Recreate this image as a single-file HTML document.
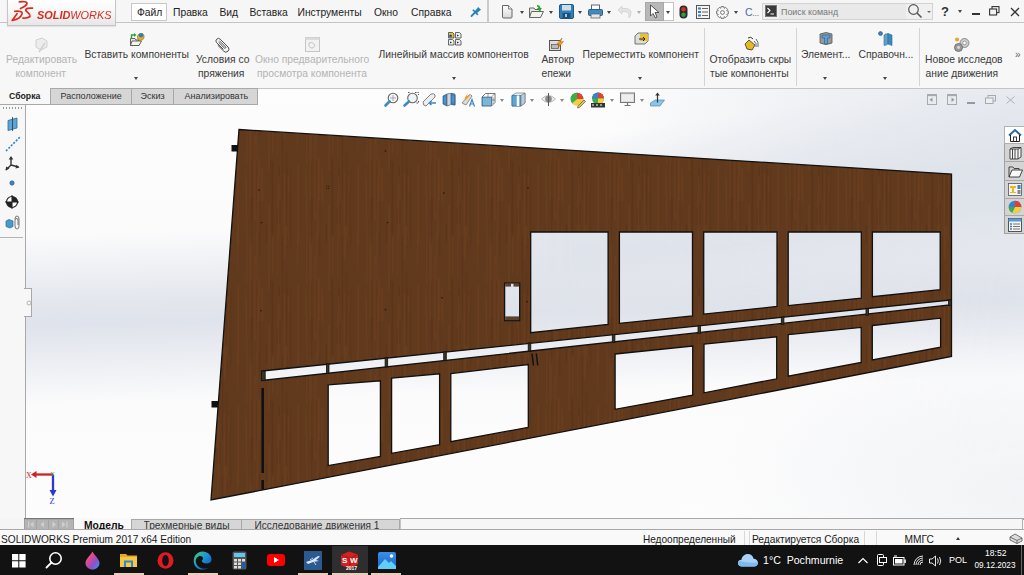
<!DOCTYPE html>
<html><head><meta charset="utf-8">
<style>
*{margin:0;padding:0;box-sizing:border-box}
html,body{width:1024px;height:575px;overflow:hidden;background:#f5f5f5;font-family:"Liberation Sans",sans-serif;color:#333}
.a{position:absolute}
.t{position:absolute;white-space:nowrap;font-size:10.3px;line-height:12px;color:#3a3a3a}
.g{color:#b4b4b4}
.dd{position:absolute;width:0;height:0;border-left:2.5px solid transparent;border-right:2.5px solid transparent;border-top:3px solid #444}
svg{position:absolute;overflow:visible}
</style></head><body>
<!-- title bar -->
<div class="a" style="left:0;top:0;width:1024px;height:23px;background:#f6f6f6;border-bottom:1.5px solid #c4c4c4"></div>
<!-- ribbon -->
<div class="a" style="left:0;top:23px;width:1024px;height:66px;background:#f7f7f7;border-bottom:1.5px solid #c4c4c4"></div>


<!-- logo -->
<div class="a" style="left:7px;top:-1px;width:109px;height:27px;background:linear-gradient(180deg,#ffffff 0%,#f7f7f7 50%,#e6e6e6 100%);border:1px solid #c6c6c6;border-top:none;box-shadow:0 1px 1px rgba(0,0,0,0.08)"></div>
<svg width="40" height="24" style="left:0;top:0" viewBox="0 0 40 24">
<g fill="none" stroke="#db2a1e" stroke-width="1.7" stroke-linecap="round" stroke-linejoin="round">
<path d="M19.3,1.8 C23,1.3 27.5,1.6 27,3.6 C26.3,5.6 23.5,7.2 20.5,8.5"/>
<path d="M14.8,11.3 C19,10.9 22.8,11.3 22,14 C21,17 16.5,19.6 12.2,20.5 L17.2,13.6"/>
<path d="M32.5,8.2 C29,8 25.3,8.3 25.8,10.2 C26.3,12.2 30.6,13.6 30.1,16 C29.6,17.9 26,18.1 23,18.2"/>
</g>
</svg>
<div class="t" style="left:36.5px;top:8px;font-size:11.6px;line-height:13px;font-style:italic;color:#d52d22;transform-origin:0 0;transform:scaleX(0.94)"><b>SOLID</b>WORKS</div>

<!-- menu -->
<div class="a" style="left:131px;top:3px;width:36px;height:18px;background:#fff;border:1px solid #c8c8c8"></div>
<div class="t" style="left:137px;top:7px;color:#222">Файл</div>
<div class="t" style="left:173px;top:7px;color:#222">Правка</div>
<div class="t" style="left:219.5px;top:7px;color:#222">Вид</div>
<div class="t" style="left:249.5px;top:7px;color:#222">Вставка</div>
<div class="t" style="left:297.5px;top:7px;color:#222">Инструменты</div>
<div class="t" style="left:374px;top:7px;color:#222">Окно</div>
<div class="t" style="left:411px;top:7px;color:#222">Справка</div>
<svg width="12" height="12" style="left:470px;top:5px" viewBox="0 0 12 12"><path d="M1.5,11 L5.5,7" stroke="#2a84b8" stroke-width="1.8" stroke-linecap="round"/><path d="M2.3,5.3 L7.3,10.5 L8.4,9.3 L3.5,4.3Z" fill="#2a84b8"/><path d="M4.5,6.5 L8.2,2 L11,4.8 L6.5,8.5Z" fill="#2a84b8"/></svg>
<div class="a" style="left:487px;top:0;width:2px;height:22px;background:#cacaca"></div>

<!-- QAT -->
<svg width="14" height="15" style="left:500px;top:4px" viewBox="0 0 14 15"><defs><linearGradient id="nd" x1="0" y1="0" x2="0" y2="1"><stop offset="0" stop-color="#fff"/><stop offset="1" stop-color="#d8d8d8"/></linearGradient></defs><path d="M2.5,1.5 H8.5 L12,5 V13 Q12,14 11,14 H3.5 Q2.5,14 2.5,13 Z" fill="url(#nd)" stroke="#666" stroke-width="1"/><path d="M8.5,1.5 V5 H12" fill="#eee" stroke="#666" stroke-width="0.8"/></svg>
<div class="dd" style="left:519.5px;top:11px"></div>
<svg width="17" height="15" style="left:528px;top:4px" viewBox="0 0 17 15"><path d="M1.5,4 H6 L7,5.5 H12 V13.5 H1.5 Z" fill="#e8e8e0" stroke="#666"/><path d="M3.5,7.5 H15.5 L12.5,13.5 H1.5 Z" fill="#f2f2ea" stroke="#666"/><path d="M9,1 Q12,1 12.5,4 L14,4 L11.5,7.5 L9,4 L10.5,4 Q10,2.5 9,2.5Z" fill="#2aa33a"/></svg>
<div class="dd" style="left:549px;top:11px"></div>
<svg width="15" height="15" style="left:558.5px;top:4px" viewBox="0 0 15 15"><rect x="0.5" y="0.5" width="14" height="14" rx="1.5" fill="#2f7fb8" stroke="#1d5a88"/><rect x="3" y="1" width="9" height="5.5" fill="#cfdde8"/><rect x="3.5" y="9" width="8" height="5.5" fill="#1e4f78"/><rect x="6" y="10" width="2" height="3" fill="#9cc"/></svg>
<div class="dd" style="left:578px;top:11px"></div>
<svg width="15" height="15" style="left:587.5px;top:4px" viewBox="0 0 15 15"><rect x="3.5" y="1" width="8" height="5" fill="#fff" stroke="#666"/><rect x="0.5" y="5.5" width="14" height="6" rx="1" fill="#3d8ac4" stroke="#24618f"/><rect x="3" y="10" width="9" height="4" fill="#e6e6e6" stroke="#666" stroke-width="0.8"/></svg>
<div class="dd" style="left:607px;top:11px"></div>
<svg width="15" height="15" style="left:617px;top:4px" viewBox="0 0 15 15"><path d="M5,2 L1,6 L5,10 V7.5 H8 Q12,7.5 12,11 V14 Q14.5,11 14,8 Q13.5,4.5 8,4.5 H5 Z" fill="#e4e4e4" stroke="#cfcfcf" stroke-width="0.8"/></svg>
<div class="dd" style="left:636.5px;top:11px;border-top-color:#aaa"></div>
<div class="a" style="left:645px;top:2px;width:29px;height:19px;background:#fff;border:1px solid #c4c4c4"></div>
<div class="a" style="left:645px;top:2px;width:19px;height:19px;background:#b8b8b8;border:1px solid #a8a8a8"></div>
<svg width="12" height="15" style="left:649px;top:4px" viewBox="0 0 12 15"><path d="M1.5,1 V12 L4,9.5 L6.5,14 L8,13 L6,8.5 H10 Z" fill="#fff" stroke="#444" stroke-width="0.9" stroke-linejoin="round"/></svg>
<div class="dd" style="left:666px;top:11px"></div>
<svg width="9" height="14" style="left:679px;top:5px" viewBox="0 0 9 14"><rect x="0.5" y="0.5" width="8" height="13" rx="4" fill="#2a2a2a"/><circle cx="4.5" cy="4.2" r="2.3" fill="#e02a2a"/><circle cx="4.5" cy="9.8" r="2.3" fill="#2aa040"/></svg>
<svg width="14" height="14" style="left:696px;top:5px" viewBox="0 0 14 14"><rect x="0.5" y="0.5" width="13" height="13" fill="#f4f4f4" stroke="#555"/><rect x="2" y="2.5" width="3" height="2" fill="#3a7fc0"/><rect x="2" y="6" width="3" height="2" fill="#3a7fc0"/><rect x="2" y="9.5" width="3" height="2" fill="#3a7fc0"/><path d="M6,3.5 H12 M6,7 H12 M6,10.5 H12" stroke="#666"/></svg>
<svg width="13" height="13" style="left:715.5px;top:5.5px" viewBox="0 0 13 13"><path d="M10.77,4.79 L12.33,5.06 L12.33,7.94 L10.77,8.21 L10.73,8.31 L11.64,9.60 L9.60,11.64 L8.31,10.73 L8.21,10.77 L7.94,12.33 L5.06,12.33 L4.79,10.77 L4.69,10.73 L3.40,11.64 L1.36,9.60 L2.27,8.31 L2.23,8.21 L0.67,7.94 L0.67,5.06 L2.23,4.79 L2.27,4.69 L1.36,3.40 L3.40,1.36 L4.69,2.27 L4.79,2.23 L5.06,0.67 L7.94,0.67 L8.21,2.23 L8.31,2.27 L9.60,1.36 L11.64,3.40 L10.73,4.69Z" fill="#f6f6f6" stroke="#666" stroke-width="0.9" stroke-linejoin="round"/><circle cx="6.5" cy="6.5" r="1.9" fill="#fff" stroke="#666" stroke-width="0.9"/></svg>
<div class="dd" style="left:734px;top:11px"></div>
<div class="t" style="left:745px;top:6px;font-size:10.5px;color:#3a6fa8;letter-spacing:-0.3px">C<span style="color:#778;font-size:9px">...</span></div>

<!-- search -->
<div class="a" style="left:762px;top:3px;width:171px;height:17px;background:#f0f0f0;border:1px solid #d2d2d2"></div>
<div class="a" style="left:779px;top:4px;width:127px;height:15px;background:#e9e9e9"></div>
<svg width="12" height="12" style="left:765px;top:5px" viewBox="0 0 12 12"><rect x="0.5" y="0.5" width="11" height="11" fill="#3a3a3a" stroke="#777"/><path d="M2.5,3 L5,5.5 L2.5,8" fill="none" stroke="#fff" stroke-width="1.1"/><path d="M5.5,9 H9" stroke="#fff"/></svg>
<div class="t" style="left:781px;top:5.5px;font-size:8.9px;color:#777">Поиск команд</div>
<svg width="16" height="16" style="left:907px;top:3px" viewBox="0 0 16 16"><circle cx="6.5" cy="6.5" r="4.8" fill="none" stroke="#555" stroke-width="1.2"/><path d="M10,10 L14.5,14.5" stroke="#555" stroke-width="1.6"/></svg>
<div class="dd" style="left:926.5px;top:11px;border-left-width:2px;border-right-width:2px;border-top-width:2px;border-top-color:#666"></div>
<div class="t" style="left:941px;top:5px;font-size:13px;line-height:14px;font-weight:bold;color:#333">?</div>
<div class="dd" style="left:957.5px;top:10px"></div>
<div class="a" style="left:971.5px;top:13px;width:8px;height:2px;background:#333"></div>
<svg width="11" height="10" style="left:989px;top:6px" viewBox="0 0 11 10"><rect x="3" y="0.6" width="7" height="6" fill="none" stroke="#333" stroke-width="1.1"/><rect x="0.6" y="3" width="7" height="6" fill="#f3f3f3" stroke="#333" stroke-width="1.1"/></svg>
<svg width="10" height="10" style="left:1009.5px;top:6.5px" viewBox="0 0 10 10"><path d="M1,1 L9,9 M9,1 L1,9" stroke="#333" stroke-width="1.3"/></svg>


<!-- ribbon content -->
<svg width="16" height="16" style="left:33px;top:36.5px" viewBox="0 0 16 16" opacity="0.35"><path d="M3,3 L9,1 L14,4 L14,10 L8,13 L3,10 Z" fill="#ddd" stroke="#888"/><path d="M6,15 L12,6" stroke="#888" stroke-width="1.5"/></svg>
<div class="t g" style="left:6px;top:54px">Редактировать</div>
<div class="t g" style="left:15.5px;top:68px">компонент</div>

<svg width="16" height="15" style="left:128.5px;top:32px" viewBox="0 0 16 15"><path d="M1.5,6.5 H6 L7,8 H10 V13.5 H1.5Z" fill="#e6e6e6" stroke="#555" stroke-width="0.9"/><path d="M3,9 H12.5 L10,13.5 H1.5Z" fill="#f4f4f0" stroke="#555" stroke-width="0.9"/><path d="M8.5,4.5 Q8.5,2 11.5,1.5 Q14.5,1 15,3.5 V6 Q14,8.5 11,8.5 Q8.5,8 8.5,6Z" fill="#e8b020" stroke="#8a6a10" stroke-width="0.6"/><circle cx="12" cy="3.2" r="2.2" fill="#2a7fc0"/><path d="M2.5,6.5 V3 H5.5" fill="none" stroke="#2aa040" stroke-width="1.4"/><path d="M5,1 L7.5,3 L5,5Z" fill="#2aa040"/></svg>
<div class="t" style="left:84.5px;top:49.2px">Вставить компоненты</div>
<div class="dd" style="left:133.5px;top:76.5px"></div>

<svg width="14" height="15" style="left:214.5px;top:36.5px" viewBox="0 0 14 15"><g transform="rotate(-45 7 7.5)" fill="none" stroke="#444" stroke-width="0.9"><path d="M4.5,12 V2.5 A2.5,2.5 0 0 1 9.5,2.5 V13.5 A3,3 0 0 1 3.5,13.5 V5"/><path d="M6.2,3.5 V12 A0.9,0.9 0 0 0 7.8,12 V3"/></g></svg>
<div class="t" style="left:196px;top:54px">Условия со</div>
<div class="t" style="left:198px;top:68px">пряжения</div>

<svg width="15" height="15" style="left:305px;top:36.5px" viewBox="0 0 15 15" opacity="0.45"><rect x="0.5" y="0.5" width="14" height="14" fill="#eee" stroke="#888"/><rect x="0.5" y="0.5" width="14" height="2.5" fill="#bbb"/><path d="M4,6 Q7,4 10,8 Q9,12 6,11 Q3,10 4,6Z" fill="none" stroke="#888"/></svg>
<div class="t g" style="left:255px;top:54px">Окно предварительного</div>
<div class="t g" style="left:257px;top:68px">просмотра компонента</div>

<svg width="14" height="14" style="left:447.5px;top:31.5px" viewBox="0 0 14 14"><path d="M0.5,0.5 H4.5 L6,2 V6 H0.5Z" fill="#e8c02a" stroke="#444" stroke-width="0.8"/><rect x="1" y="3" width="3" height="2.5" fill="#3a7fc0"/><path d="M7.5,0.5 H11.5 L13,2 V6 H7.5Z" fill="#eee" stroke="#444" stroke-width="0.8"/><path d="M0.5,7.5 H4.5 L6,9 V13 H0.5Z" fill="#eee" stroke="#444" stroke-width="0.8"/><path d="M7.5,7.5 H11.5 L13,9 V13 H7.5Z" fill="#eee" stroke="#444" stroke-width="0.8"/><path d="M2,2.5 L4,3.5 L2,4.5Z M9,2.5 L11,3.5 L9,4.5Z M2,9.5 L4,10.5 L2,11.5Z M9,9.5 L11,10.5 L9,11.5Z" fill="#333"/></svg>
<div class="t" style="left:378.5px;top:49.2px">Линейный массив компонентов</div>
<div class="dd" style="left:452px;top:76.5px"></div>

<svg width="15" height="14" style="left:549px;top:37px" viewBox="0 0 15 14"><rect x="0.5" y="3.5" width="11" height="10" fill="#ddd" stroke="#555"/><rect x="2.5" y="7.5" width="7" height="4" fill="#bbb" stroke="#555" stroke-width="0.7"/><path d="M8,7 L13,1 L11.5,5 L14.5,4.5 L9,11 L10.5,7Z" fill="#f0a020" stroke="#c05010" stroke-width="0.5"/></svg>
<div class="t" style="left:541.5px;top:54px">Автокр</div>
<div class="t" style="left:541.5px;top:68px">епежи</div>

<svg width="15" height="13" style="left:633.5px;top:32px" viewBox="0 0 15 13"><path d="M1,4 L4,1 H14 V9 L11,12 H1Z" fill="#ddd" stroke="#555" stroke-width="0.8"/><rect x="6" y="2" width="8" height="7" fill="#e8c030"/><path d="M5,7 H11 M9,5 L11,7 L9,9" stroke="#222" stroke-width="1" fill="none"/></svg>
<div class="t" style="left:582.5px;top:49.2px">Переместить компонент</div>
<div class="dd" style="left:638px;top:76.5px"></div>
<div class="a" style="left:704px;top:28px;width:1px;height:58px;background:#d4d4d4"></div>

<svg width="15" height="15" style="left:743.5px;top:36px" viewBox="0 0 15 15"><path d="M1,8 L5,4 L11,9 L8,14 L3,13Z" fill="#e8b820" stroke="#333" stroke-width="0.8"/><path d="M10,5 Q13,7 12,11 M12,3 Q15,6 14,11" stroke="#666" fill="none"/><path d="M4,2 Q7,0 9,3" stroke="#333" fill="none"/></svg>
<div class="t" style="left:709.5px;top:54px">Отобразить скры</div>
<div class="t" style="left:710px;top:68px">тые компоненты</div>
<div class="a" style="left:796px;top:28px;width:1px;height:58px;background:#d4d4d4"></div>

<svg width="14" height="15" style="left:818.5px;top:31px" viewBox="0 0 14 15"><path d="M1,3 Q7,0 13,3 V12 Q7,15 1,12Z" fill="#999" stroke="#555" stroke-width="0.8"/><path d="M3,4 H11 V7 H8.5 V13 H5.5 V7 H3Z" fill="#5aa0d8" stroke="#2a5a8a" stroke-width="0.6"/></svg>
<div class="t" style="left:801px;top:49.2px">Элемент...</div>
<div class="dd" style="left:822.5px;top:76.5px"></div>

<svg width="15" height="15" style="left:878px;top:31px" viewBox="0 0 15 15"><circle cx="2.5" cy="2.5" r="2" fill="#3a7fc0" stroke="#245a8a" stroke-width="0.6"/><path d="M6,4 L10,2.5 V13 L6,14.5Z" fill="#5aaad8" stroke="#2a6a9a" stroke-width="0.6"/><path d="M10,2.5 L14,4 V14.5 L10,13Z" fill="#3a8ac0" stroke="#2a6a9a" stroke-width="0.6"/><path d="M8,2 V15" stroke="#888" stroke-width="0.6"/></svg>
<div class="t" style="left:858.5px;top:49.2px">Справочн...</div>
<div class="dd" style="left:883px;top:76.5px"></div>
<div class="a" style="left:919px;top:28px;width:1px;height:58px;background:#d4d4d4"></div>

<svg width="16" height="15" style="left:954px;top:36.5px" viewBox="0 0 16 15"><circle cx="10.5" cy="6" r="4.5" fill="#ccc" stroke="#777" stroke-width="0.8"/><circle cx="10.5" cy="6" r="1.8" fill="#fff" stroke="#777" stroke-width="0.6"/><circle cx="4.5" cy="10.5" r="4" fill="#999" stroke="#666" stroke-width="0.8"/><circle cx="4.5" cy="10.5" r="1.4" fill="#ddd"/><circle cx="3" cy="2.5" r="2" fill="#f0a030"/></svg>
<div class="t" style="left:925px;top:54px">Новое исследов</div>
<div class="t" style="left:925.5px;top:68px">ание движения</div>
<div class="t" style="left:1015px;top:49px;font-size:10px;color:#666">»</div>

<!-- viewport -->
<div class="a" style="left:26px;top:88.5px;width:998px;height:430px;background:linear-gradient(178.45deg,#fdfdfd 0%,#fbfbfc 32%,#eef0f4 40%,#e3e6ed 47%,#dfe3eb 52%,#eceef3 60%,#fbfbfc 69%,#fdfdfd 100%)"></div>
<div class="a" style="left:26px;top:88.5px;width:998px;height:430px;background:radial-gradient(ellipse 320px 140px at 1000px 400px,rgba(222,226,234,0.35) 0%,rgba(222,226,234,0) 100%),radial-gradient(ellipse 420px 230px at 1000px 40px,rgba(222,226,234,0.75) 0%,rgba(222,226,234,0.45) 50%,rgba(222,226,234,0) 100%),linear-gradient(172deg,rgba(222,226,234,0) 0%,rgba(222,226,234,0) 22%,rgba(222,226,234,0.92) 37%,rgba(222,226,234,0.92) 45%,rgba(222,226,234,0) 56%);-webkit-mask-image:linear-gradient(90deg,transparent 0%,transparent 30%,#000 55%,#000 100%);mask-image:linear-gradient(90deg,transparent 0%,transparent 30%,#000 55%,#000 100%)"></div>
<!-- tab bar + left panel -->
<div class="a" style="left:0;top:87px;width:258px;height:17.5px;background:#f7f7f7;border-bottom:1.5px solid #a8a8a8"></div>
<div class="a" style="left:0;top:104.5px;width:26px;height:413.5px;background:#f7f7f7;border-right:1.5px solid #a8a8a8"></div>
<div class="a" style="left:2.5px;top:107px;width:20px;height:2px;background:repeating-linear-gradient(90deg,#999 0 1px,transparent 1px 3px)"></div>
<div class="a" style="left:0;top:237px;width:23px;height:1px;background:#b4b4b4"></div>
<div class="a" style="left:24px;top:288px;width:8px;height:29px;background:#f7f7f7;border:1.5px solid #a8a8a8;border-left:none"></div>
<svg width="6" height="6" style="left:25.5px;top:299.5px" viewBox="0 0 6 6"><circle cx="3" cy="3" r="2" fill="none" stroke="#aaa" stroke-width="0.9"/></svg>

<!-- tabs -->
<div class="t" style="left:9px;top:90px;font-size:8.7px;font-weight:bold;color:#222">Сборка</div>
<div class="a" style="left:50px;top:88px;width:208px;height:16.5px;background:#d6d6d6;border:1px solid #a8a8a8"></div>
<div class="a" style="left:131px;top:88px;width:1px;height:16px;background:#a8a8a8"></div>
<div class="a" style="left:173px;top:88px;width:1px;height:16px;background:#a8a8a8"></div>
<div class="t" style="left:60.5px;top:90px;font-size:9px;color:#333">Расположение</div>
<div class="t" style="left:140.5px;top:90px;font-size:9px;color:#333">Эскиз</div>
<div class="t" style="left:184.5px;top:90px;font-size:9px;color:#333">Анализировать</div>


<!-- panel -->
<svg width="1024" height="575" style="left:0;top:0">
<defs>
<pattern id="wood" patternUnits="userSpaceOnUse" width="60" height="120"><rect width="60" height="120" fill="#61391c"/><rect x="14.3" y="15.7" width="2" height="83.7" fill="#6c4120" opacity="0.6"/><rect x="37.5" y="72.7" width="0.8" height="83.2" fill="#6c4120" opacity="0.6"/><rect x="37.5" y="-47.3" width="0.8" height="83.2" fill="#6c4120" opacity="0.6"/><rect x="15.6" y="23.0" width="1" height="68.8" fill="#5a3218" opacity="0.7"/><rect x="50.2" y="47.7" width="1.6" height="79.6" fill="#5e361a" opacity="0.7"/><rect x="50.2" y="-72.3" width="1.6" height="79.6" fill="#5e361a" opacity="0.7"/><rect x="38.1" y="46.8" width="2" height="16.1" fill="#5c3419" opacity="0.7"/><rect x="9.6" y="5.1" width="2" height="73.5" fill="#6a3f1f" opacity="0.7"/><rect x="28.4" y="85.7" width="1.6" height="84.1" fill="#6c4120" opacity="0.6"/><rect x="28.4" y="-34.3" width="1.6" height="84.1" fill="#6c4120" opacity="0.6"/><rect x="43.7" y="53.4" width="2" height="85.2" fill="#6a3f1f" opacity="0.7"/><rect x="43.7" y="-66.6" width="2" height="85.2" fill="#6a3f1f" opacity="0.7"/><rect x="5.8" y="59.4" width="1" height="34.3" fill="#6c4120" opacity="0.6"/><rect x="46.7" y="50.5" width="1.3" height="77.5" fill="#5a3218" opacity="0.7"/><rect x="46.7" y="-69.5" width="1.3" height="77.5" fill="#5a3218" opacity="0.7"/><rect x="21.1" y="48.9" width="2" height="32.4" fill="#6a3f1f" opacity="0.7"/><rect x="40.9" y="102.8" width="0.8" height="89.3" fill="#5e361a" opacity="0.7"/><rect x="40.9" y="-17.2" width="0.8" height="89.3" fill="#5e361a" opacity="0.7"/><rect x="41.9" y="115.8" width="1.3" height="82.9" fill="#5a3218" opacity="0.7"/><rect x="41.9" y="-4.2" width="1.3" height="82.9" fill="#5a3218" opacity="0.7"/><rect x="6.2" y="76.0" width="1" height="89.1" fill="#6a3f1f" opacity="0.7"/><rect x="6.2" y="-44.0" width="1" height="89.1" fill="#6a3f1f" opacity="0.7"/><rect x="17.1" y="57.8" width="0.8" height="62.9" fill="#6c4120" opacity="0.6"/><rect x="17.1" y="-62.2" width="0.8" height="62.9" fill="#6c4120" opacity="0.6"/><rect x="5.3" y="49.3" width="0.8" height="26.3" fill="#6a3f1f" opacity="0.7"/><rect x="25.6" y="104.7" width="1.6" height="18.3" fill="#5a3218" opacity="0.7"/><rect x="25.6" y="-15.3" width="1.6" height="18.3" fill="#5a3218" opacity="0.7"/><rect x="45.7" y="86.2" width="1.6" height="39.8" fill="#6a3f1f" opacity="0.7"/><rect x="45.7" y="-33.8" width="1.6" height="39.8" fill="#6a3f1f" opacity="0.7"/><rect x="30.3" y="37.2" width="0.8" height="20.8" fill="#5a3218" opacity="0.7"/><rect x="32.1" y="116.6" width="1" height="36.9" fill="#6a3f1f" opacity="0.7"/><rect x="32.1" y="-3.4" width="1" height="36.9" fill="#6a3f1f" opacity="0.7"/><rect x="9.4" y="117.6" width="0.8" height="40.5" fill="#6a3f1f" opacity="0.7"/><rect x="9.4" y="-2.4" width="0.8" height="40.5" fill="#6a3f1f" opacity="0.7"/><rect x="57.5" y="45.2" width="1.6" height="80.2" fill="#6c4120" opacity="0.6"/><rect x="57.5" y="-74.8" width="1.6" height="80.2" fill="#6c4120" opacity="0.6"/><rect x="38.6" y="81.7" width="2" height="22.7" fill="#5a3218" opacity="0.7"/><rect x="16.3" y="112.4" width="1" height="47.8" fill="#6a3f1f" opacity="0.7"/><rect x="16.3" y="-7.6" width="1" height="47.8" fill="#6a3f1f" opacity="0.7"/><rect x="31.3" y="40.7" width="2" height="74.1" fill="#5a3218" opacity="0.7"/><rect x="18.9" y="73.9" width="1.6" height="62.4" fill="#5c3419" opacity="0.7"/><rect x="18.9" y="-46.1" width="1.6" height="62.4" fill="#5c3419" opacity="0.7"/><rect x="38.0" y="56.0" width="1.3" height="65.9" fill="#6a3f1f" opacity="0.7"/><rect x="38.0" y="-64.0" width="1.3" height="65.9" fill="#6a3f1f" opacity="0.7"/><rect x="36.5" y="88.6" width="1.3" height="16.7" fill="#5c3419" opacity="0.7"/><rect x="57.3" y="115.6" width="0.8" height="33.8" fill="#6c4120" opacity="0.6"/><rect x="57.3" y="-4.4" width="0.8" height="33.8" fill="#6c4120" opacity="0.6"/><rect x="17.9" y="38.4" width="2" height="42.3" fill="#6a3f1f" opacity="0.7"/><rect x="45.5" y="31.7" width="2" height="74.0" fill="#5c3419" opacity="0.7"/><rect x="46.3" y="116.6" width="0.8" height="66.3" fill="#5e361a" opacity="0.7"/><rect x="46.3" y="-3.4" width="0.8" height="66.3" fill="#5e361a" opacity="0.7"/><rect x="18.6" y="78.4" width="1" height="35.2" fill="#6a3f1f" opacity="0.7"/><rect x="11.2" y="77.9" width="1.6" height="22.3" fill="#5a3218" opacity="0.7"/><rect x="19.3" y="81.0" width="1.3" height="31.8" fill="#5e361a" opacity="0.7"/><rect x="4.8" y="106.2" width="1" height="48.8" fill="#5e361a" opacity="0.7"/><rect x="4.8" y="-13.8" width="1" height="48.8" fill="#5e361a" opacity="0.7"/><rect x="47.2" y="63.6" width="0.8" height="29.3" fill="#5a3218" opacity="0.7"/><rect x="11.0" y="40.8" width="1.3" height="77.1" fill="#5c3419" opacity="0.7"/><rect x="48.4" y="70.7" width="1.3" height="46.6" fill="#5a3218" opacity="0.7"/><rect x="47.6" y="55.8" width="1.3" height="62.6" fill="#6a3f1f" opacity="0.7"/></pattern>
</defs>
<path fill="url(#wood)" stroke="#111" stroke-width="1.3" fill-rule="evenodd" d="
M239,129.5 L951.5,174 L951.5,356.5 L211,500 Z
M530.7,232 L608.1,232 L608.1,324.4 L530.7,332.7 Z
M619.4,232 L692.5,232 L692.5,316 L619.4,323.3 Z
M703.7,232 L777,232 L777,306.5 L703.7,314.1 Z
M788.2,232 L861.3,232 L861.3,298.1 L788.2,305.6 Z
M872.4,232 L940.2,232 L940.2,289.7 L872.4,296.7 Z
M328.2,384.8 L380.4,380.8 L380.4,456.5 L328.2,465.6 Z
M391.6,378.2 L439.6,373.8 L439.6,444.7 L391.6,453.3 Z
M450.8,373.6 L528.3,364.5 L528.3,427.3 L450.8,441.6 Z
M615.1,354 L692.7,346 L692.7,395.1 L615.1,409.3 Z
M704,344.2 L776.7,336.8 L776.7,378.8 L704,392.8 Z
M788.2,334.7 L861.2,327.4 L861.2,362.5 L788.2,376.1 Z
M872.3,325.5 L940.6,318.2 L940.6,347.2 L872.3,360 Z
M262,371 L950,300 L950,305 L262,380.5 Z
M504.6,283.2 L519.7,283.2 L519.7,320.6 L504.6,320.6 Z
"/>

<g>
<g fill="#2a180c"><rect x="384.7" y="150.4" width="1.6" height="1.3"/><rect x="258.2" y="189.4" width="1.6" height="1.3"/><rect x="443.0" y="192.4" width="1.6" height="1.3"/><rect x="260.7" y="221.9" width="1.6" height="1.3"/><rect x="386.7" y="221.9" width="1.6" height="1.3"/><rect x="527.2" y="187.4" width="1.6" height="1.3"/><rect x="441.2" y="297.1" width="1.6" height="1.3"/><rect x="260.2" y="310.0" width="1.6" height="1.3"/><rect x="384.7" y="308.9" width="1.6" height="1.3"/><rect x="526.2" y="301.0" width="1.6" height="1.3"/><rect x="326.2" y="185.8" width="1" height="1"/><rect x="328.2" y="185.8" width="1" height="1"/><rect x="326.2" y="188" width="1" height="1"/><rect x="328.2" y="188" width="1" height="1"/></g>
<!-- side tabs -->
<rect x="231.5" y="145" width="6.5" height="6.5" fill="#111"/>
<rect x="211.5" y="401" width="6.5" height="6.5" fill="#111"/>
<!-- slot bars -->
<rect x="505.2" y="283.8" width="14" height="2.8" fill="#5a4232"/>
<rect x="511" y="283.8" width="2.5" height="3.5" fill="#dfe2ea"/>
<rect x="505.2" y="316.4" width="14" height="3.8" fill="#5a4232"/>
<!-- black bar -->
<rect x="261.4" y="388" width="2.6" height="85" fill="#111"/>
<rect x="261.4" y="480" width="2.6" height="9.5" fill="#111"/>
<!-- double ticks -->
<path d="M532,353.5 L533.5,365.5 M536.3,353.5 L537.8,365.5" stroke="#111" stroke-width="1.5"/>
</g>
<g fill="#3a3522" stroke="#111" stroke-width="0.8">
<rect x="261.6" y="371" width="3.6" height="9.5"/>
<rect x="326.4" y="363.8" width="2.6" height="9.6"/>
<rect x="385.1" y="357.8" width="2.6" height="9"/>
<rect x="443.7" y="351.8" width="2.6" height="8.8"/>
<rect x="528.2" y="343" width="2.6" height="8.3"/>
<rect x="612.3" y="334.3" width="2.6" height="8.2"/>
<rect x="698" y="325.5" width="2.6" height="7.8"/>
<rect x="781.3" y="317" width="2.6" height="7.3"/>
<rect x="866" y="308.4" width="2.6" height="6.8"/>
<rect x="948.6" y="300" width="2.6" height="5.5"/>
</g>
</svg>


<!-- left toolbar icons -->
<svg width="14" height="14" style="left:6px;top:117px" viewBox="0 0 14 14"><path d="M2,3.5 L11,1 V11 L2,13.5Z" fill="#5aa6d6" stroke="#2d6a96" stroke-width="0.8"/><path d="M6.5,0 V14" stroke="#333" stroke-width="0.8"/></svg>
<svg width="16" height="16" style="left:4.5px;top:136px" viewBox="0 0 16 16"><path d="M1,15 L15,1" stroke="#2a82c4" stroke-width="1.6" stroke-dasharray="2 1.5"/></svg>
<svg width="15" height="15" style="left:5px;top:156px" viewBox="0 0 15 15"><path d="M6,9 V1.5 M6,9 L13.5,11 M6,9 L1,14" stroke="#333" stroke-width="1.4" fill="none"/><path d="M6,0 L8.3,3.5 H3.7Z M14.5,11.5 L10.5,12.5 L11.5,8.8Z M0.5,14.5 L1.2,10.5 L4.5,12.5Z" fill="#333"/></svg>
<svg width="6" height="6" style="left:9px;top:180px" viewBox="0 0 6 6"><circle cx="3" cy="3" r="2.2" fill="#3a84c0" stroke="#2a5a8a" stroke-width="0.6"/></svg>
<svg width="14" height="14" style="left:5px;top:195px" viewBox="0 0 14 14"><circle cx="7" cy="7" r="5.5" fill="#fff" stroke="#222" stroke-width="1.2"/><path d="M7,1.5 A5.5,5.5 0 0 1 12.5,7 H7Z M7,12.5 A5.5,5.5 0 0 1 1.5,7 H7Z" fill="#222"/><path d="M7,0 V14 M0,7 H14" stroke="#222" stroke-width="1"/></svg>
<svg width="16" height="15" style="left:4.5px;top:214.5px" viewBox="0 0 16 15"><path d="M1,6 L4,4.5 L8,6 V11.5 L5,13 L1,11.5Z" fill="#4a9ad0" stroke="#2a6a9a" stroke-width="0.7"/><path d="M10,4 Q10,1 12,1 Q14,1 14,4 V11 Q14,14 12,14 Q10,14 10,11 V5 Q10,3.5 12,3.5 Q13,3.5 13,5 V10" fill="none" stroke="#666" stroke-width="0.9"/></svg>

<!-- heads-up view toolbar -->
<svg width="15" height="15" style="left:383.5px;top:92px" viewBox="0 0 15 15"><circle cx="9" cy="6" r="4.8" fill="#f4f4f4" stroke="#666" stroke-width="1.1"/><path d="M9,3 V9 M6,6 H12" stroke="#999" stroke-width="0.8"/><path d="M5.5,9.5 L1.5,13.5" stroke="#3a8ac4" stroke-width="2.6" stroke-linecap="round"/></svg>
<svg width="16" height="15" style="left:402.5px;top:92px" viewBox="0 0 16 15"><circle cx="9.5" cy="6" r="4.8" fill="#eef4f8" stroke="#666" stroke-width="1.1"/><path d="M5,0.5 H7 M12,0.5 H15.5 V3 M15.5,9 V11 H13" stroke="#555" stroke-dasharray="1.5 1" fill="none"/><path d="M6,9.5 L1.5,13.5" stroke="#3a8ac4" stroke-width="2.6" stroke-linecap="round"/></svg>
<svg width="15" height="15" style="left:422px;top:92px" viewBox="0 0 15 15"><path d="M1,10 L9,2 Q12,1 13,3 Q14,5 11,7 L4,14 Q1,14 1,10Z" fill="#eee" stroke="#777" stroke-width="0.9"/><path d="M7,11 H14 M7,11 L9.5,9 M7,11 L9.5,13" stroke="#3a8ac4" stroke-width="1.6" fill="none"/></svg>
<svg width="15" height="15" style="left:442px;top:92px" viewBox="0 0 15 15"><path d="M1,4 L5,2 V14 L1,12Z" fill="#3a8ac4" stroke="#2a5a8a" stroke-width="0.7"/><path d="M5,2 Q9,0.5 13,2 V13 Q9,11.5 5,14Z" fill="#cfd6dc" stroke="#666" stroke-width="0.7"/><path d="M9,1.5 L13,3 V13 L9,12Z" fill="#3a8ac4" stroke="#2a5a8a" stroke-width="0.7"/><path d="M2,6 H4 M2,8 H4 M2,10 H4 M10,5 H12 M10,7 H12 M10,9 H12" stroke="#8ac" stroke-width="0.6"/></svg>
<svg width="15" height="15" style="left:461px;top:92px" viewBox="0 0 15 15"><path d="M1,11 L8,3 Q10,2 11,4 L5,13Z" fill="#ddd" stroke="#777" stroke-width="0.8"/><path d="M3,7 L7,1 L6,4 L9,3.5 L4,9 L5,6Z" fill="#f0a020"/><path d="M8.5,14.5 L11,7.5 L13.5,14.5 M9.5,12 H12.5" stroke="#3a8ac4" stroke-width="1.2" fill="none"/></svg>
<svg width="15" height="15" style="left:481px;top:92px" viewBox="0 0 15 15"><path d="M1,5 L4.5,1.5 H14 V10.5 L10.5,14 H1Z" fill="#fff" stroke="#555" stroke-width="0.8"/><path d="M1,5 H10.5 V14 M10.5,5 L14,1.5 M7,1.5 V5 M12,5 V12 M10.5,8 H14" stroke="#555" stroke-width="0.6" fill="none"/><rect x="1.3" y="5.3" width="9" height="8.5" fill="#7ab6dc" stroke="#2a6a9a" stroke-width="0.6"/></svg>
<div class="dd" style="left:500px;top:99px;border-top-color:#888"></div>
<svg width="15" height="15" style="left:511px;top:92px" viewBox="0 0 15 15"><path d="M1,3.5 L5,1 H14 V11 L10,14 H1Z" fill="#eee" stroke="#777" stroke-width="0.7"/><path d="M1,3.5 H10 V14 H1Z" fill="#5aa6d6" stroke="#2a6a9a" stroke-width="0.7"/><path d="M7,3.5 V14" stroke="#fff" stroke-width="2.5"/><path d="M10,3.5 L14,1 V11 L10,14Z" fill="#bcd" stroke="#777" stroke-width="0.7"/></svg>
<div class="dd" style="left:530px;top:99px;border-top-color:#888"></div>
<svg width="15" height="15" style="left:540.5px;top:92px" viewBox="0 0 15 15"><path d="M0.5,7 Q7.5,0 14.5,7 Q7.5,14 0.5,7Z" fill="#eee" stroke="#aaa" stroke-width="0.8"/><circle cx="7.5" cy="7" r="3.3" fill="#888"/><path d="M7.5,1 V14" stroke="#555" stroke-width="1"/></svg>
<div class="dd" style="left:560px;top:99px;border-top-color:#888"></div>
<svg width="16" height="16" style="left:570px;top:91.5px" viewBox="0 0 16 16"><circle cx="7" cy="7" r="6.3" fill="#3a7fd0"/><path d="M7,7 L7,0.7 A6.3,6.3 0 0 1 13.3,7Z" fill="#e0403a"/><path d="M7,7 L13.3,7 A6.3,6.3 0 0 1 2,11Z" fill="#f0d040"/><path d="M7,7 L2,11 A6.3,6.3 0 0 1 0.7,7 A6.3,6.3 0 0 1 7,0.7Z" fill="#3ab040"/><path d="M8,14 L14,8 L15.5,9.5 L9.5,15.5 L7.5,15.8Z" fill="#f0c040" stroke="#555" stroke-width="0.7"/></svg>
<svg width="16" height="16" style="left:589.5px;top:91.5px" viewBox="0 0 16 16"><circle cx="8" cy="6.5" r="6" fill="#3ab040"/><path d="M8,6.5 L8,0.5 A6,6 0 0 1 14,6.5Z" fill="#e0403a"/><path d="M8,6.5 L2,6.5 A6,6 0 0 1 8,0.5Z" fill="#3a7fd0"/><path d="M8,6.5 L14,6.5 A6,6 0 0 1 8,12.5Z" fill="#f0d040"/><rect x="1" y="11" width="14" height="4.5" fill="#333"/><path d="M2,13 H4 M6,13 H8 M10,13 H12" stroke="#fff" stroke-width="1.2"/></svg>
<div class="dd" style="left:609.5px;top:99px;border-top-color:#888"></div>
<svg width="15" height="15" style="left:620px;top:92px" viewBox="0 0 15 15"><rect x="0.5" y="1" width="14" height="9.5" fill="#ddd" stroke="#777"/><rect x="2" y="2.5" width="11" height="6.5" fill="#eee"/><path d="M7.5,10.5 V13 M4.5,13.5 H10.5" stroke="#777" stroke-width="1.2"/></svg>
<div class="dd" style="left:639.5px;top:99px;border-top-color:#888"></div>
<svg width="15" height="15" style="left:650px;top:92px" viewBox="0 0 15 15"><path d="M0.5,11 L5,8 H14.5 L10,14 H0.5Z" fill="#8cc4e6" stroke="#4a8ab8" stroke-width="0.7"/><path d="M7.5,10.5 V2" stroke="#333" stroke-width="1.2"/><path d="M7.5,0.5 L9.8,3.5 H5.2Z" fill="#333"/></svg>

<!-- doc window buttons -->
<svg width="10" height="11" style="left:927px;top:94px" viewBox="0 0 10 11"><rect x="0.5" y="0.5" width="9" height="10" fill="none" stroke="#aaa"/><path d="M0.5,1.5 H9.5" stroke="#aaa" stroke-width="1.3"/><path d="M5.5,3.5 L2.5,5.8 L5.5,8Z" fill="#999"/></svg>
<svg width="10" height="11" style="left:946.5px;top:94px" viewBox="0 0 10 11"><rect x="0.5" y="0.5" width="9" height="10" fill="none" stroke="#aaa"/><path d="M0.5,1.5 H9.5" stroke="#aaa" stroke-width="1.3"/><path d="M4.5,3.5 L7.5,5.8 L4.5,8Z" fill="#999"/></svg>
<div class="a" style="left:967px;top:102px;width:8px;height:1.7px;background:#999"></div>
<svg width="11" height="9" style="left:985px;top:95px" viewBox="0 0 11 9"><rect x="3" y="0.5" width="7.5" height="5.5" fill="none" stroke="#aaa"/><rect x="0.5" y="3" width="7.5" height="5.5" fill="#eceef2" stroke="#aaa"/></svg>
<svg width="9" height="8" style="left:1005.5px;top:96px" viewBox="0 0 9 8"><path d="M0.5,0.5 L8.5,7.5 M8.5,0.5 L0.5,7.5" stroke="#aaa" stroke-width="0.9"/></svg>

<!-- task pane -->
<div class="a" style="left:1004px;top:126px;width:22px;height:108px;background:#d4d4d4;border:1px solid #a0a0a0"></div>
<div class="a" style="left:1004px;top:126px;width:22px;height:18px;background:#fff;border:1px solid #b0b0b0;border-right:none"></div>
<div class="a" style="left:1004px;top:161px;width:22px;height:1px;background:#a8a8a8"></div>
<div class="a" style="left:1004px;top:180px;width:22px;height:1px;background:#a8a8a8"></div>
<div class="a" style="left:1004px;top:197.5px;width:22px;height:1px;background:#a8a8a8"></div>
<div class="a" style="left:1004px;top:215px;width:22px;height:1px;background:#a8a8a8"></div>
<svg width="14" height="13" style="left:1008px;top:128.5px" viewBox="0 0 14 13"><path d="M1,6.5 L7,1 L13,6.5" fill="none" stroke="#2a6a9a" stroke-width="2"/><path d="M2.5,6 V12.5 H11.5 V6" fill="none" stroke="#222" stroke-width="1"/><rect x="5.5" y="8" width="3" height="4.5" fill="none" stroke="#222" stroke-width="0.9"/></svg>
<svg width="13" height="14" style="left:1008.5px;top:145.5px" viewBox="0 0 13 14"><path d="M1,3 L4,1.5 H12 V11 L9,13 H1Z M1,3 H9 V13 M9,3 L12,1.5 M3.5,3 V13 M6,3 V13" fill="#f4f4f4" stroke="#333" stroke-width="0.9"/></svg>
<svg width="15" height="13" style="left:1007.5px;top:164.5px" viewBox="0 0 15 13"><path d="M1,2 H5 L6,3.5 H11 V5" fill="#f4f4f4" stroke="#333" stroke-width="0.9"/><path d="M1,2 V12 L4,5 H14.5 L11.5,12 H1" fill="#fafafa" stroke="#333" stroke-width="0.9"/></svg>
<svg width="14" height="13" style="left:1008px;top:182.5px" viewBox="0 0 14 13"><rect x="0.5" y="0.5" width="13" height="12" fill="#f4f4f4" stroke="#555" stroke-width="0.8"/><path d="M2,3 H8 V5 H6 V9 H8 V10 H2 V9 H4 V5 H2Z" fill="#e8b820"/><rect x="9.5" y="2" width="3" height="4" fill="#3a7fc0"/><rect x="9.5" y="7" width="3" height="4" fill="#888"/></svg>
<svg width="14" height="14" style="left:1008px;top:199.5px" viewBox="0 0 14 14"><circle cx="7" cy="7" r="6.3" fill="#3a7fd0"/><path d="M7,7 L7,0.7 A6.3,6.3 0 0 1 13.3,7Z" fill="#e0403a"/><path d="M7,7 L13.3,7 A6.3,6.3 0 0 1 4,12.5Z" fill="#f0d040"/><path d="M7,7 L4,12.5 A6.3,6.3 0 0 1 0.7,7Z" fill="#3ab040"/></svg>
<svg width="14" height="14" style="left:1008px;top:218px" viewBox="0 0 14 14"><rect x="0.5" y="0.5" width="13" height="13" fill="#f4f4f4" stroke="#444" stroke-width="0.9"/><rect x="0.5" y="0.5" width="13" height="3" fill="#5a9ad0"/><path d="M2,6 H4 M2,8.5 H4 M2,11 H4" stroke="#3a7fc0" stroke-width="1.3"/><path d="M5,6 H12 M5,8.5 H12 M5,11 H12" stroke="#555" stroke-width="0.8"/></svg>

<!-- triad -->
<svg width="40" height="40" style="left:24px;top:468px" viewBox="0 0 40 40">
<path d="M29,6.5 H10" stroke="#cc2222" stroke-width="2.3"/><path d="M7,6.5 L12.5,3 V10Z" fill="#cc2222"/>
<path d="M29,6.5 V24" stroke="#2a3ad0" stroke-width="2.3"/><path d="M29,28.5 L25.5,22 H32.5Z" fill="#2a3ad0"/>
<text x="2" y="10" font-family="Liberation Serif" font-size="8" fill="#e02020">X</text>
<text x="26.5" y="7.5" font-family="Liberation Serif" font-size="6" fill="#22aa22">Y</text>
<text x="25.5" y="36" font-family="Liberation Serif" font-size="8.5" fill="#2a3ae0">Z</text>
</svg>


<!-- bottom tabs -->
<div class="a" style="left:24px;top:518px;width:1000px;height:12px;background:#f9f9f9;border-bottom:1px solid #b0b0b0"></div>
<div class="a" style="left:399.5px;top:518px;width:624px;height:1.5px;background:#a8a8a8"></div>
<div class="a" style="left:399.5px;top:518.5px;width:623px;height:11px;background:#f6f6f6;border-left:1px solid #c4c4c4;border-right:1.5px solid #b0b0b0"></div>
<div class="a" style="left:24px;top:518px;width:50px;height:11.5px;background:#b4b4b4;border:1px solid #a0a0a0"></div>
<svg width="50" height="12" style="left:24px;top:518px" viewBox="0 0 50 12"><rect x="0" y="0" width="50" height="1.2" fill="#777"/><g fill="#cfcfcf"><rect x="4" y="3.5" width="1.2" height="6"/><path d="M9.5,3.5 V9.5 L6,6.5Z"/><path d="M20,3.5 V9.5 L16.5,6.5Z"/><path d="M28.5,3.5 V9.5 L32,6.5Z"/><path d="M38,3.5 V9.5 L41.5,6.5Z"/><rect x="42.3" y="3.5" width="1.2" height="6"/></g><path d="M12.5,1.5 V11 M24.5,1.5 V11 M34.5,1.5 V11" stroke="#a0a0a0" stroke-width="0.8"/></svg>
<div class="t" style="left:84px;top:519.5px;font-size:10.3px;line-height:12px;font-weight:bold;color:#111">Модель</div>
<div class="a" style="left:131px;top:518.5px;width:269px;height:11px;background:#d6d6d6;border:1px solid #a8a8a8"></div>
<div class="a" style="left:240.5px;top:518.5px;width:1px;height:11px;background:#a8a8a8"></div>
<div class="t" style="left:143.5px;top:519.5px;font-size:10.2px;line-height:12px;color:#333;height:10px;overflow:hidden">Трехмерные виды</div>
<div class="t" style="left:254.5px;top:519.5px;font-size:10.1px;line-height:12px;color:#333;height:10px;overflow:hidden">Исследование движения 1</div>

<!-- status bar -->
<div class="a" style="left:0;top:529px;width:1024px;height:16px;background:#f9f9f9;border-top:1px solid #a8a8a8"></div>
<div class="t" style="left:1px;top:534px;font-size:10.15px;color:#1a1a1a">SOLIDWORKS Premium 2017 x64 Edition</div>
<div class="t" style="left:643px;top:534px;font-size:10.05px;color:#1a1a1a">Недоопределенный</div>
<div class="a" style="left:744px;top:531px;width:1px;height:14px;background:#d8d8d8"></div>
<div class="a" style="left:749px;top:531px;width:1px;height:14px;background:#d8d8d8"></div>
<div class="t" style="left:752px;top:534px;font-size:10.2px;color:#1a1a1a">Редактируется Сборка</div>
<div class="a" style="left:863.5px;top:531px;width:1px;height:14px;background:#d8d8d8"></div>
<div class="a" style="left:875.5px;top:531px;width:1px;height:14px;background:#d8d8d8"></div>
<div class="t" style="left:904.5px;top:534px;font-size:10.2px;color:#1a1a1a">ММГС</div>
<div class="dd" style="left:955.5px;top:536.5px;border-top:none;border-bottom:3px solid #333"></div>
<svg width="14" height="11" style="left:1008.5px;top:533px" viewBox="0 0 14 11"><path d="M1,4 L6,1 L13,5 V8 L8,10.5 L1,7Z" fill="#ddd" stroke="#555" stroke-width="0.8"/><path d="M1,4 L8,7.5 L13,5 M8,7.5 V10.5" fill="none" stroke="#555" stroke-width="0.8"/></svg>

<!-- taskbar -->

<div class="a" style="left:0;top:545px;width:1024px;height:30px;background:#121212"></div>

<svg width="14" height="14" style="left:11.5px;top:553.5px" viewBox="0 0 14 14"><path d="M0,0 H6.3 V6.3 H0Z M7.3,0 H13.6 V6.3 H7.3Z M0,7.3 H6.3 V13.6 H0Z M7.3,7.3 H13.6 V13.6 H7.3Z" fill="#fff"/></svg>
<svg width="18" height="18" style="left:45px;top:551px" viewBox="0 0 18 18"><circle cx="10.5" cy="7.5" r="5.7" fill="none" stroke="#fff" stroke-width="1.6"/><path d="M6.5,11.5 L1.5,16.5" stroke="#fff" stroke-width="1.8" stroke-linecap="round"/></svg>
<svg width="15" height="19" style="left:85px;top:550.5px" viewBox="0 0 15 19"><defs><linearGradient id="dr" x1="0" y1="0" x2="1" y2="1"><stop offset="0" stop-color="#f0a030"/><stop offset="0.35" stop-color="#e04890"/><stop offset="0.65" stop-color="#8a50d0"/><stop offset="1" stop-color="#30a0f0"/></linearGradient></defs><path d="M7.5,0.5 C9,4 14.5,8 14.5,12 C14.5,16 11,18.5 7.5,18.5 C4,18.5 0.5,16 0.5,12 C0.5,8 6,4 7.5,0.5Z" fill="url(#dr)"/></svg>
<svg width="17" height="14" style="left:120px;top:552.5px" viewBox="0 0 17 14"><path d="M0,1 H6 L7.5,2.5 H17 V14 H0Z" fill="#e8a820"/><rect x="0" y="4" width="17" height="10" fill="#f8c840"/><path d="M5,14 V8.5 H12 V14" fill="none" stroke="#2a8ad8" stroke-width="2"/></svg>
<div class="a" style="left:114px;top:573px;width:30px;height:2px;background:#e8cdb8"></div>
<svg width="17" height="17" style="left:157px;top:551.5px" viewBox="0 0 17 17"><ellipse cx="8.5" cy="8.5" rx="8" ry="8.2" fill="#e01b24"/><ellipse cx="8.5" cy="8.5" rx="3.3" ry="5.8" fill="#121212"/></svg>
<svg width="19" height="19" style="left:193px;top:550.5px" viewBox="0 0 19 19"><defs><linearGradient id="eg" x1="0" y1="0" x2="1" y2="1"><stop offset="0" stop-color="#40d070"/><stop offset="0.5" stop-color="#1a90d8"/><stop offset="1" stop-color="#0a50b0"/></linearGradient></defs><path d="M9.5,0.5 C15,0.5 18.5,4.5 18.5,8.5 C18.5,11 16.5,12.5 13.5,12.5 C10.5,12.5 9,11.5 9,10 C9,9 10,8.5 10,7.5 C10,5.5 7.5,4.5 5.5,5.5 C2.5,7 2,11 4,14 C6,17.5 11,18.5 15,17 C12,19 6,19.5 3,16 C-0.5,12 0.5,6 3,3.5 C5,1.5 7,0.5 9.5,0.5Z" fill="url(#eg)"/></svg>
<div class="a" style="left:187.5px;top:573px;width:30px;height:2px;background:#e8cdb8"></div>
<svg width="15" height="19" style="left:231.5px;top:550.5px" viewBox="0 0 15 19"><rect x="0.5" y="0.5" width="14" height="18" rx="1.5" fill="#555"/><rect x="2" y="2" width="11" height="4" fill="#60c8f0"/><g fill="#ddd"><rect x="2" y="8" width="3" height="2.5"/><rect x="6" y="8" width="3" height="2.5"/><rect x="10" y="8" width="3" height="2.5"/><rect x="2" y="11.5" width="3" height="2.5"/><rect x="6" y="11.5" width="3" height="2.5"/><rect x="2" y="15" width="3" height="2.5"/><rect x="6" y="15" width="3" height="2.5"/></g><rect x="10" y="11.5" width="3" height="6" fill="#1a60b0"/></svg>
<svg width="18" height="12" style="left:267px;top:554px" viewBox="0 0 18 12"><rect x="0" y="0" width="18" height="12" rx="3" fill="#f00"/><path d="M7,3 L12,6 L7,9Z" fill="#fff"/></svg>
<svg width="18" height="19" style="left:303.5px;top:550.5px" viewBox="0 0 18 19"><rect x="0" y="0" width="18" height="19" fill="#2a5a90"/><path d="M2,11 L8,9 L14,5 L16,5.5 L12,9 L15,10 L9,11 L4,13Z" fill="#dde8f0"/><path d="M6,9 L9,7 M10,11 L12,14" stroke="#c8d8e8" stroke-width="1"/></svg>
<div class="a" style="left:297.5px;top:573px;width:30px;height:2px;background:#e8cdb8"></div>
<div class="a" style="left:331.5px;top:545.5px;width:36px;height:29.5px;background:#2e2e2e"></div>
<div class="a" style="left:331.5px;top:573px;width:36px;height:2px;background:#e8cdb8"></div>
<svg width="19" height="19" style="left:340px;top:550.5px" viewBox="0 0 19 19"><path d="M1,4 L9,0.5 L18,3.5 V13 L10,18 L1,14Z" fill="#d42020"/><path d="M1,4 L10,7.5 L18,3.5 M10,7.5 V18" fill="none" stroke="#901010" stroke-width="0.7"/><text x="2" y="12" font-family="Liberation Sans" font-weight="bold" font-size="8" fill="#fff">S</text><text x="10" y="11.5" font-family="Liberation Sans" font-weight="bold" font-size="8" fill="#fff">W</text><text x="6" y="18.5" font-family="Liberation Sans" font-weight="bold" font-size="5" fill="#fff">2017</text></svg>
<svg width="18" height="17" style="left:377.5px;top:551.5px" viewBox="0 0 18 17"><defs><linearGradient id="ph" x1="0" y1="0" x2="0" y2="1"><stop offset="0" stop-color="#3a90e8"/><stop offset="1" stop-color="#1a60c8"/></linearGradient></defs><rect x="0" y="0" width="18" height="17" rx="2" fill="url(#ph)"/><path d="M0,15 L7,7 L11,11 L13,9 L18,14 V17 H0Z" fill="#60d0f8"/><circle cx="13.5" cy="4" r="1.8" fill="#fff"/></svg>
<div class="a" style="left:371px;top:573px;width:30px;height:2px;background:#e8cdb8"></div>

<svg width="20" height="14" style="left:737.5px;top:553px" viewBox="0 0 20 14"><path d="M4,13.5 C1.5,13.5 0,12 0,10 C0,8 1.5,6.8 3.5,6.8 C3.8,3.5 6.5,1 9.8,1 C12.8,1 15,3 15.6,5.8 C18,5.8 20,7.5 20,9.8 C20,12 18.2,13.5 16,13.5Z" fill="#a8d0f8"/><path d="M4,13.5 C1.5,13.5 0,12 0,10 C0,9 0.5,8 1.5,7.5 C4,9 10,10 20,9.5 C20,12 18.2,13.5 16,13.5Z" fill="#80b8f0"/></svg>
<div class="t" style="left:763px;top:553.5px;font-size:10.6px;color:#fff">1°C&nbsp; Pochmurnie</div>
<svg width="10" height="7" style="left:858px;top:556.5px" viewBox="0 0 10 7"><path d="M0.5,6 L5,1.5 L9.5,6" fill="none" stroke="#fff" stroke-width="1.2"/></svg>
<svg width="10" height="12" style="left:876.5px;top:554px" viewBox="0 0 10 12"><rect x="0.5" y="0.5" width="6" height="11" rx="1" fill="none" stroke="#fff" stroke-width="1"/><rect x="2.5" y="3.5" width="7" height="5" fill="#121212" stroke="#fff" stroke-width="1"/></svg>
<svg width="13" height="10" style="left:893px;top:555.5px" viewBox="0 0 13 10"><rect x="0.5" y="1.5" width="10.5" height="7.5" fill="none" stroke="#fff"/><rect x="2" y="3" width="7.5" height="4.5" fill="#fff"/><rect x="11.3" y="3.5" width="1.5" height="3.5" fill="#fff"/><path d="M1,0 H4" stroke="#fff"/></svg>
<svg width="11" height="11" style="left:913px;top:555px" viewBox="0 0 11 11"><path d="M1,10 A9,9 0 0 1 10,1 M3,10 A7,7 0 0 1 10,3 M5,10 A5,5 0 0 1 10,5 M7,10 A3,3 0 0 1 10,7" fill="none" stroke="#fff" stroke-width="0.9"/></svg>
<svg width="13" height="12" style="left:928.5px;top:554.5px" viewBox="0 0 13 12"><path d="M0.5,4 H3 L6.5,1 V11 L3,8 H0.5Z" fill="none" stroke="#fff" stroke-width="0.9"/><path d="M8.5,3.5 Q10,6 8.5,8.5 M10.5,2 Q13,6 10.5,10" fill="none" stroke="#fff" stroke-width="0.9"/></svg>
<div class="t" style="left:949px;top:554px;font-size:9px;color:#fff">POL</div>
<div class="t" style="left:985px;top:547px;font-size:8.6px;color:#fff">18:52</div>
<div class="t" style="left:974.5px;top:560px;font-size:8.2px;color:#fff">09.12.2023</div>
<div class="a" style="left:1020.5px;top:545px;width:1px;height:30px;background:#666"></div>
</body></html>
